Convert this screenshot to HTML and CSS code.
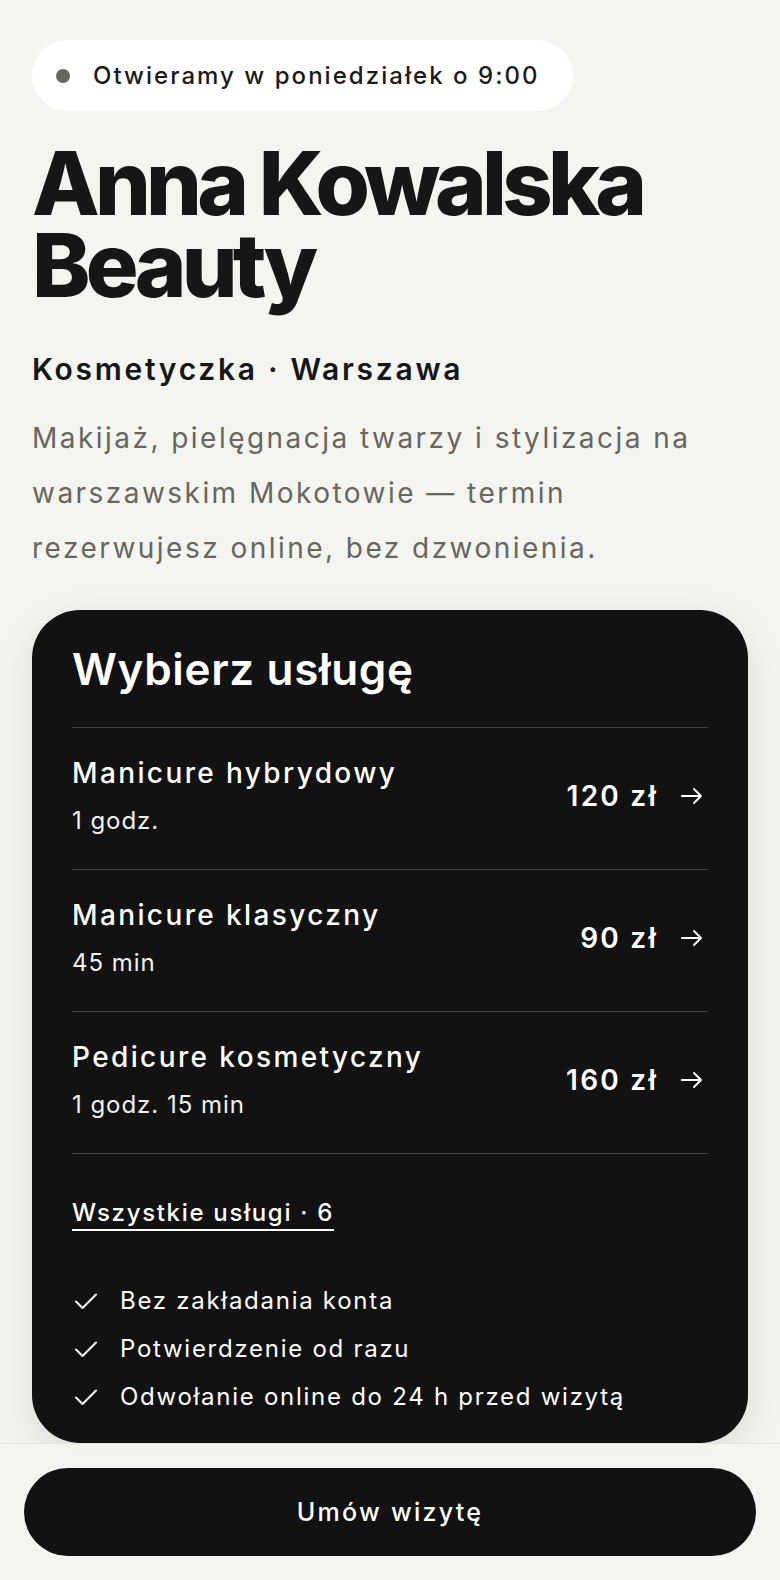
FILE: index.html
```html
<!DOCTYPE html>
<html lang="pl">
<head>
<meta charset="utf-8">
<title>Anna Kowalska Beauty</title>
<link rel="stylesheet" href="styles.css">
</head>
<body>
<main class="page">
  <div class="status"><span class="dot"></span><span class="status-text">Otwieramy w poniedziałek o 9:00</span></div>
  <h1 class="title"><span class="title-line">Anna Kowalska</span><span class="title-line">Beauty</span></h1>
  <p class="subtitle">Kosmetyczka · Warszawa</p>
  <p class="lead">Makijaż, pielęgnacja twarzy i stylizacja na warszawskim Mokotowie — termin rezerwujesz online, bez dzwonienia.</p>

  <section class="card">
    <h2 class="card-title">Wybierz usługę</h2>
    <ul class="services">
      <li class="service">
        <div class="service-info"><span class="service-name">Manicure hybrydowy</span><span class="service-time">1 godz.</span></div>
        <div class="service-price"><span>120 zł</span><svg class="arrow" viewBox="0 0 24 24" width="24" height="24"><path d="M2 12h19M14 5l7 7-7 7"/></svg></div>
      </li>
      <li class="service">
        <div class="service-info"><span class="service-name">Manicure klasyczny</span><span class="service-time">45 min</span></div>
        <div class="service-price"><span>90 zł</span><svg class="arrow" viewBox="0 0 24 24" width="24" height="24"><path d="M2 12h19M14 5l7 7-7 7"/></svg></div>
      </li>
      <li class="service">
        <div class="service-info"><span class="service-name">Pedicure kosmetyczny</span><span class="service-time">1 godz. 15 min</span></div>
        <div class="service-price"><span>160 zł</span><svg class="arrow" viewBox="0 0 24 24" width="24" height="24"><path d="M2 12h19M14 5l7 7-7 7"/></svg></div>
      </li>
    </ul>
    <a class="all-link" href="#">Wszystkie usługi · 6</a>
    <ul class="checks">
      <li><svg class="check" viewBox="0 0 28 28" width="28" height="28"><path d="M4 14.5l6.5 6.5L24 7.5"/></svg>Bez zakładania konta</li>
      <li><svg class="check" viewBox="0 0 28 28" width="28" height="28"><path d="M4 14.5l6.5 6.5L24 7.5"/></svg>Potwierdzenie od razu</li>
      <li><svg class="check" viewBox="0 0 28 28" width="28" height="28"><path d="M4 14.5l6.5 6.5L24 7.5"/></svg>Odwołanie online do 24 h przed wizytą</li>
    </ul>
  </section>
</main>
<div class="bottom-bar">
  <a class="cta" href="#">Umów wizytę</a>
</div>
</body>
</html>
```

FILE: styles.css
```css
* { box-sizing: border-box; }
html, body { margin: 0; padding: 0; }
body {
  background: #f4f4f0;
  color: #161616;
  font-family: Inter, "Noto Sans", "DejaVu Sans", sans-serif;
}
.page {
  padding: 40px 32px 160px;
}
.status {
  display: inline-flex;
  align-items: center;
  height: 71px;
  padding: 0 33px 0 24px;
  gap: 23px;
  background: #ffffff;
  border-radius: 36px;
}
.dot {
  width: 14px;
  height: 14px;
  border-radius: 50%;
  background: #66665f;
}
.status-text {
  font-size: 24px;
  font-weight: 500;
  letter-spacing: 0.085em;
  color: #1a1a1a;
}
.title {
  margin: 31px 0 0;
  font-size: 88px;
  font-weight: 800;
  letter-spacing: -0.054em;
  color: #161616;
}
.title-line {
  display: block;
  height: 82px;
  line-height: 82px;
}
.subtitle {
  margin: 45px 0 0;
  font-size: 30px;
  line-height: 36px;
  font-weight: 600;
  letter-spacing: 0.09em;
  color: #161616;
}
.lead {
  margin: 24px 0 0;
  font-size: 28px;
  line-height: 55px;
  letter-spacing: 0.088em;
  color: #66665f;
}
.card {
  margin-top: 34px;
  background: #121212;
  color: #ffffff;
  border-radius: 48px;
  padding: 33px 40px 30px;
  box-shadow: 0 12px 40px rgba(0, 0, 0, 0.10);
}
.card-title {
  margin: 0 0 31px;
  font-size: 44px;
  line-height: 53px;
  font-weight: 600;
  letter-spacing: 0.015em;
}
.services {
  list-style: none;
  margin: 0;
  padding: 0;
}
.service {
  display: flex;
  align-items: center;
  justify-content: space-between;
  border-top: 1px solid #444444;
  padding: 27px 0 32px;
}
.service:last-child {
  border-bottom: 1px solid #444444;
}
.service-info {
  display: flex;
  flex-direction: column;
  gap: 14px;
}
.service-name {
  font-size: 28px;
  line-height: 36px;
  font-weight: 500;
  letter-spacing: 0.085em;
}
.service-time {
  font-size: 24px;
  line-height: 32px;
  letter-spacing: 0.04em;
  color: #f0f0f0;
}
.service-price {
  display: flex;
  align-items: center;
  gap: 22px;
  font-size: 28px;
  font-weight: 600;
  letter-spacing: 0.08em;
  padding-right: 4px;
}
.arrow {
  fill: none;
  stroke: #ffffff;
  stroke-width: 2;
  stroke-linecap: round;
  stroke-linejoin: round;
}
.all-link {
  display: inline-block;
  margin-top: 43px;
  font-size: 24px;
  line-height: 32px;
  font-weight: 500;
  letter-spacing: 0.07em;
  color: #ffffff;
  text-decoration: none;
  border-bottom: 2px solid #ffffff;
}
.checks {
  list-style: none;
  margin: 54px 0 0;
  padding: 0;
  display: flex;
  flex-direction: column;
  gap: 16px;
}
.checks li {
  display: flex;
  align-items: center;
  gap: 20px;
  font-size: 24px;
  line-height: 32px;
  letter-spacing: 0.072em;
}
.check {
  fill: none;
  stroke: #ffffff;
  stroke-width: 2;
  stroke-linecap: round;
  stroke-linejoin: round;
}
.bottom-bar {
  position: fixed;
  left: 0;
  right: 0;
  bottom: 0;
  padding: 24px 24px 24px;
  background: rgba(244, 244, 240, 0.97);
  border-top: 1px solid #e4e4df;
}
.cta {
  display: flex;
  align-items: center;
  justify-content: center;
  height: 88px;
  border-radius: 44px;
  background: #121212;
  color: #ffffff;
  font-size: 25px;
  font-weight: 500;
  letter-spacing: 0.09em;
  text-decoration: none;
}
```
